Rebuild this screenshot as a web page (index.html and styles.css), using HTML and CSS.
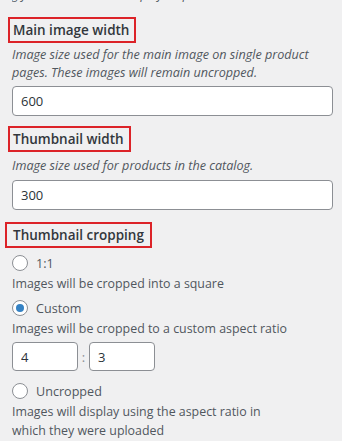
FILE: index.html
```html
<!DOCTYPE html>
<html lang="en">
<head>
  <meta charset="UTF-8" />
  <meta name="viewport" content="width=device-width, initial-scale=1.0" />
  <title>Product images</title>
  <link rel="stylesheet" href="styles.css">
</head>
<body>
  <div class="panel">
    <!-- Tail of the section text, scrolled off the top -->
    <div class="cut"><span>g your thumbnails to display on product</span></div>

    <!-- Main image width -->
    <div class="field field-main">
      <span class="label">Main image width</span>
      <p class="desc">Image size used for the main image on single product pages. These images will remain uncropped.</p>
      <input type="text" class="text-input" value="600">
    </div>

    <!-- Thumbnail width -->
    <div class="field field-thumb">
      <span class="label">Thumbnail width</span>
      <p class="desc">Image size used for products in the catalog.</p>
      <input type="text" class="text-input" value="300">
    </div>

    <!-- Thumbnail cropping -->
    <div class="field field-crop">
      <span class="label">Thumbnail cropping</span>
      <label class="option first">
        <input type="radio" name="crop" value="1:1">
        <span>1:1</span>
      </label>
      <p class="note">Images will be cropped into a square</p>
      <label class="option">
        <input type="radio" name="crop" value="custom" checked>
        <span>Custom</span>
      </label>
      <p class="note">Images will be cropped to a custom aspect ratio</p>
      <div class="ratio">
        <input type="text" class="small-input" value="4">
        <span class="colon">:</span>
        <input type="text" class="small-input" value="3">
      </div>
      <label class="option last">
        <input type="radio" name="crop" value="uncropped">
        <span>Uncropped</span>
      </label>
      <p class="note final">Images will display using the aspect ratio in which they were uploaded</p>
    </div>
  </div>
</body>
</html>
```

FILE: styles.css
```css
/* Global */
body {
  margin: 0;
  background: #f0f0f1;
  color: #3c434a;
  font-family: "Open Sans", "Noto Sans", sans-serif;
  overflow: hidden;
}
p {
  margin: 0;
}
.panel {
  padding: 0 9px 0 12px;
}
/* Cropped line at top */
.cut {
  height: 4px;
  overflow: hidden;
  font-style: italic;
  font-size: 12px;
  color: #50575e;
}
.cut span {
  display: block;
  line-height: 18px;
  margin-top: -14px;
}
/* Highlighted labels */
.label {
  display: inline-block;
  border: 2px solid #dc2328;
  padding: 1px 5px 1px 3px;
  line-height: 20px;
  font-size: 13.5px;
  font-weight: 600;
  color: #32373c;
}
.field-main {
  padding-top: 13px;
}
.field-main .label {
  margin-left: -4px;
}
.field-thumb {
  margin-top: 10px;
}
.field-thumb .label {
  margin-left: -4px;
}
.field-crop {
  margin-top: 12px;
}
.field-crop .label {
  margin-left: -7px;
  padding-right: 6px;
  padding-left: 6px;
}
/* Descriptions */
.desc {
  margin: 3px 0 4px;
  font-style: italic;
  font-size: 12.6px;
  line-height: 18px;
  color: #50575e;
}
.field-thumb .desc {
  margin: 5px 0 5px;
}
/* Text inputs */
.text-input,
.small-input {
  display: block;
  box-sizing: border-box;
  width: 100%;
  height: 30px;
  margin: 0;
  padding: 0 8px;
  border: 1px solid #8c8f94;
  border-radius: 4px;
  background: #fff;
  font-family: inherit;
  font-size: 13px;
  color: #2c3338;
}
/* Radio options */
.option {
  display: flex;
  align-items: center;
  gap: 8px;
  height: 22px;
  font-size: 12.6px;
  color: #50575e;
}
.option.first {
  margin-top: 4px;
}
.option.last {
  margin-top: 9px;
}
.option input {
  appearance: none;
  box-sizing: border-box;
  width: 16px;
  height: 16px;
  margin: 0;
  border: 1px solid #8c8f94;
  border-radius: 50%;
  background: #fff;
  display: flex;
  align-items: center;
  justify-content: center;
}
.option input:checked::before {
  content: "";
  width: 8px;
  height: 8px;
  border-radius: 50%;
  background: #3582c4;
}
.note {
  max-width: 280px;
  font-size: 12.4px;
  line-height: 20px;
  color: #50575e;
  margin-bottom: 3px;
}
.note.final {
  line-height: 19px;
}
/* Aspect ratio inputs */
.ratio {
  display: flex;
  align-items: center;
}
.small-input {
  width: 66px;
  height: 29px;
}
.colon {
  width: 11px;
  text-align: center;
  font-size: 13px;
  color: #8c8f94;
}
```
